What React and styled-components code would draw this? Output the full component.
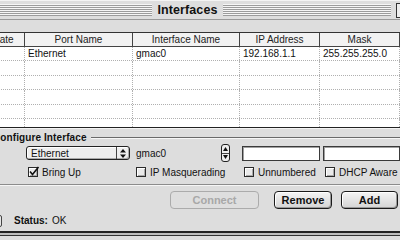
import styled, { createGlobalStyle } from "styled-components";

const COLS = "45px 108px 107px 80px 80px";

const GlobalStyle = createGlobalStyle`
  html, body {
    margin: 0;
    padding: 0;
    background: #dcdcdc;
    overflow: hidden;
  }
  body {
    font-family: "Liberation Sans", Arial, sans-serif;
    color: #111;
  }
`;

const Window = styled.div`
  width: 420px;
  height: 240px;
  margin-left: -20px;
  background: #dddddd;
  display: flex;
  flex-direction: column;
`;

const TitleBar = styled.div`
  height: 20px;
  display: flex;
  align-items: center;
  gap: 5px;
  padding-left: 4px;
  background: #dedede;
  border-bottom: 1px solid #9a9a9a;
  border-top: 1px solid #f4f4f4;
  box-sizing: border-box;
`;

const Stripes = styled.div`
  flex: 1;
  height: 12px;
  background: repeating-linear-gradient(
    to bottom,
    #f6f6f6 0 1px,
    #9c9c9c 1px 2px
  );
`;

const Title = styled.div`
  font-weight: bold;
  font-size: 12.5px;
  color: #111;
  letter-spacing: 0.1px;
`;

const CornerBox = styled.div`
  width: 3px;
  height: 13px;
  border: 1px solid #333;
  border-right: none;
  background: #eee;
`;

const Toolbar = styled.div`
  height: 12px;
  background: #dddddd;
`;

const Table = styled.div`
  border-top: 1px solid #333;
  border-bottom: 1px solid #222;
  background: #fff;
`;

const HeaderRow = styled.div`
  display: grid;
  grid-template-columns: ${COLS};
  height: 13px;
  border-bottom: 1px solid #444;
  background: #f2f2f2;
`;

const HeadCell = styled.div`
  font-size: 10px;
  line-height: 13px;
  text-align: center;
  border-right: 1px solid #444;
  color: #222;
`;

const Body = styled.div`
  height: 80px;
  overflow: hidden;
`;

const Row = styled.div`
  display: grid;
  grid-template-columns: ${COLS};
  height: 13px;
  border-bottom: 1px dotted #b0b0b0;
  &:nth-child(even) {
    height: 14px;
  }
`;

const Cell = styled.div`
  font-size: 10px;
  line-height: 13px;
  padding-left: 3px;
  border-right: 1px dotted #b0b0b0;
  white-space: nowrap;
  overflow: hidden;
`;

const Panel = styled.div`
  flex: 1;
  display: flex;
  flex-direction: column;
  border-top: 1px solid #f4f4f4;
`;

const GroupHeader = styled.div`
  display: flex;
  align-items: center;
  height: 11px;
  margin-top: 3px;
  padding-left: 13px;
`;

const GroupLabel = styled.span`
  font-weight: bold;
  font-size: 10px;
  letter-spacing: 0.1px;
`;

const GroupLine = styled.div`
  flex: 1;
  height: 0;
  margin-left: 4px;
  border-top: 1px solid #6a6a6a;
  border-bottom: 1px solid #f6f6f6;
`;

const FormRow = styled.div`
  display: grid;
  grid-template-columns: ${COLS};
  align-items: center;
  height: ${(p) => p.$h}px;
  margin-top: ${(p) => p.$mt}px;
`;

const Popup = styled.div`
  margin-left: 1px;
  width: 104px;
  height: 14px;
  box-sizing: border-box;
  border: 1px solid #222;
  border-radius: 3px;
  background: #eeeeee;
  box-shadow: inset 1px 1px #fff, inset -1px -1px #aaa;
  display: flex;
  align-items: center;
  font-size: 10px;
`;

const PopupText = styled.span`
  flex: 1;
  padding-left: 4px;
`;

const PopupArrows = styled.div`
  width: 12px;
  height: 100%;
  border-left: 1px solid #444;
  display: flex;
  align-items: center;
  justify-content: center;
`;

const IfCell = styled.div`
  display: flex;
  align-items: center;
  justify-content: space-between;
  padding-left: 3px;
  padding-right: 10px;
  font-size: 10px;
`;

const Stepper = styled.div`
  width: 9px;
  height: 18px;
  box-sizing: border-box;
  border: 1px solid #222;
  border-radius: 3px;
  background: #eee;
  display: flex;
  flex-direction: column;
`;

const StepHalf = styled.div`
  flex: 1;
  display: flex;
  align-items: center;
  justify-content: center;
  border-top: ${(p) => (p.$bottom ? "1px solid #444" : "none")};
`;

const Field = styled.div`
  margin-left: ${(p) => p.$ml}px;
  height: 15px;
  box-sizing: border-box;
  border: 1px solid #3a3a3a;
  box-shadow: inset 1px 1px #a0a0a0;
  background: #fff;
`;

const CheckItem = styled.label`
  display: flex;
  align-items: center;
  gap: 4px;
  margin-left: ${(p) => p.$ml}px;
  font-size: 10px;
  white-space: nowrap;
`;

const Box = styled.span`
  width: 10px;
  height: 10px;
  box-sizing: border-box;
  border: 1px solid #2a2a2a;
  background: #eaeaea;
  box-shadow: inset 1px 1px #fff, inset -1px -1px #aaa;
  position: relative;
  display: inline-block;
`;

const Separator = styled.div`
  margin-top: 6px;
  border-top: 1px solid #8c8c8c;
  border-bottom: 1px solid #f6f6f6;
`;

const ButtonRow = styled.div`
  display: flex;
  justify-content: flex-end;
  gap: 9px;
  padding-right: 2px;
  margin-top: 5px;
  height: 18px;
`;

const Button = styled.button`
  width: ${(p) => p.$w}px;
  margin-right: ${(p) => p.$mr || 0}px;
  height: 18px;
  box-sizing: border-box;
  padding: 0;
  border: 1px solid ${(p) => (p.disabled ? "#ababab" : "#1a1a1a")};
  border-radius: 4px;
  background: ${(p) =>
    p.disabled ? "#dedede" : "linear-gradient(#f4f4f4, #d4d4d4)"};
  box-shadow: ${(p) =>
    p.disabled ? "none" : "inset 1px 1px #fff, inset -1px -1px #9a9a9a"};
  font-family: "Liberation Sans", Arial, sans-serif;
  font-weight: bold;
  font-size: 11px;
  color: ${(p) => (p.disabled ? "#a8a8a8" : "#111")};
`;

const StatusRow = styled.div`
  display: flex;
  align-items: center;
  height: 13px;
  margin-top: 5px;
`;

const Nub = styled.div`
  width: 22px;
  height: 12px;
  box-sizing: border-box;
  border: 1px solid #444;
  border-radius: 0 2px 2px 0;
  background: #e6e6e6;
`;

const StatusText = styled.div`
  margin-left: 12px;
  font-size: 10px;
  b {
    font-weight: bold;
    margin-right: 4px;
  }
`;

const BottomEdge = styled.div`
  margin-top: 4px;
  height: 2px;
  background: #222;
  border-bottom: 2px solid #bdbdbd;
`;

const BottomLine = styled.div`
  height: 1px;
  background: #333;
`;

const UpDown = () => (
  <svg width="6" height="9" viewBox="0 0 6 9">
    <path d="M3 0 L6 3.5 L0 3.5 Z M0 5.5 L6 5.5 L3 9 Z" fill="#111" />
  </svg>
);

const Tri = ({ down }) => (
  <svg width="5" height="4" viewBox="0 0 5 4">
    <path d={down ? "M0 0 L5 0 L2.5 4 Z" : "M2.5 0 L5 4 L0 4 Z"} fill="#111" />
  </svg>
);

const Check = () => (
  <svg
    width="12"
    height="11"
    viewBox="0 0 12 11"
    style={{ position: "absolute", left: -1, top: -2 }}
  >
    <path
      d="M2 5.5 L4.5 8.5 L10.5 1"
      stroke="#111"
      strokeWidth="1.6"
      fill="none"
    />
  </svg>
);

const Checkbox = ({ label, checked, ml }) => (
  <CheckItem $ml={ml}>
    <Box>{checked && <Check />}</Box>
    {label}
  </CheckItem>
);

const headers = ["State", "Port Name", "Interface Name", "IP Address", "Mask"];
const rows = [
  ["", "Ethernet", "gmac0", "192.168.1.1", "255.255.255.0"],
  ["", "", "", "", ""],
  ["", "", "", "", ""],
  ["", "", "", "", ""],
  ["", "", "", "", ""],
  ["", "", "", "", ""],
];

export default function App() {
  return (
    <>
      <GlobalStyle />
      <Window>
        <TitleBar>
          <Stripes />
          <Title>Interfaces</Title>
          <Stripes />
          <CornerBox />
        </TitleBar>
        <Toolbar />
        <Table>
          <HeaderRow>
            {headers.map((h) => (
              <HeadCell key={h}>{h}</HeadCell>
            ))}
          </HeaderRow>
          <Body>
            {rows.map((r, i) => (
              <Row key={i}>
                {r.map((c, j) => (
                  <Cell key={j}>{c}</Cell>
                ))}
              </Row>
            ))}
          </Body>
        </Table>
        <Panel>
          <GroupHeader>
            <GroupLabel>Configure Interface</GroupLabel>
            <GroupLine />
          </GroupHeader>
          <FormRow $h={18} $mt={1}>
            <div />
            <Popup>
              <PopupText>Ethernet</PopupText>
              <PopupArrows>
                <UpDown />
              </PopupArrows>
            </Popup>
            <IfCell>
              <span>gmac0</span>
              <Stepper>
                <StepHalf>
                  <Tri />
                </StepHalf>
                <StepHalf $bottom>
                  <Tri down />
                </StepHalf>
              </Stepper>
            </IfCell>
            <Field $ml={2} />
            <Field $ml={3} />
          </FormRow>
          <FormRow $h={12} $mt={4}>
            <div />
            <Checkbox label="Bring Up" checked ml={3} />
            <Checkbox label="IP Masquerading" ml={3} />
            <Checkbox label="Unnumbered" ml={4} />
            <Checkbox label="DHCP Aware" ml={5} />
          </FormRow>
          <Separator />
          <ButtonRow>
            <Button $w={89} $mr={6} disabled>
              Connect
            </Button>
            <Button $w={58}>Remove</Button>
            <Button $w={57}>Add</Button>
          </ButtonRow>
          <StatusRow>
            <Nub />
            <StatusText>
              <b>Status:</b>OK
            </StatusText>
          </StatusRow>
          <BottomEdge />
          <BottomLine />
        </Panel>
      </Window>
    </>
  );
}
